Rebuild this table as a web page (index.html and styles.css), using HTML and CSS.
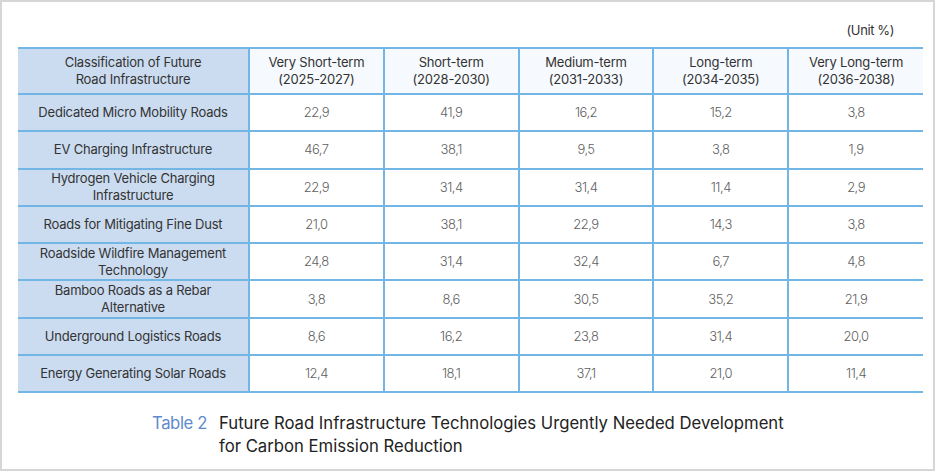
FILE: index.html
```html
<!DOCTYPE html>
<html>
<head>
<meta charset="utf-8">
<link rel="stylesheet" href="styles.css">
</head>
<body>
<div class="frame">
  <div class="unit">(Unit %)</div>
  <table class="data">
    <colgroup>
      <col class="c-first"><col class="c-num"><col class="c-num"><col class="c-num"><col class="c-num"><col class="c-num">
    </colgroup>
    <thead>
      <tr>
        <th class="lead">Classification of Future<br>Road Infrastructure</th>
        <th>Very Short-term<br>(2025-2027)</th>
        <th>Short-term<br>(2028-2030)</th>
        <th>Medium-term<br>(2031-2033)</th>
        <th>Long-term<br>(2034-2035)</th>
        <th>Very Long-term<br>(2036-2038)</th>
      </tr>
    </thead>
    <tbody>
      <tr><th class="lead">Dedicated Micro Mobility Roads</th><td>22,9</td><td>41,9</td><td>16,2</td><td>15,2</td><td>3,8</td></tr>
      <tr><th class="lead">EV Charging Infrastructure</th><td>46,7</td><td>38,1</td><td>9,5</td><td>3,8</td><td>1,9</td></tr>
      <tr><th class="lead">Hydrogen Vehicle Charging<br>Infrastructure</th><td>22,9</td><td>31,4</td><td>31,4</td><td>11,4</td><td>2,9</td></tr>
      <tr><th class="lead">Roads for Mitigating Fine Dust</th><td>21,0</td><td>38,1</td><td>22,9</td><td>14,3</td><td>3,8</td></tr>
      <tr><th class="lead">Roadside Wildfire Management<br>Technology</th><td>24,8</td><td>31,4</td><td>32,4</td><td>6,7</td><td>4,8</td></tr>
      <tr><th class="lead">Bamboo Roads as a Rebar<br>Alternative</th><td>3,8</td><td>8,6</td><td>30,5</td><td>35,2</td><td>21,9</td></tr>
      <tr><th class="lead">Underground Logistics Roads</th><td>8,6</td><td>16,2</td><td>23,8</td><td>31,4</td><td>20,0</td></tr>
      <tr><th class="lead">Energy Generating Solar Roads</th><td>12,4</td><td>18,1</td><td>37,1</td><td>21,0</td><td>11,4</td></tr>
    </tbody>
  </table>
  <div class="caption">
    <span class="cap-label">Table 2</span>
    <span class="cap-text">Future Road Infrastructure Technologies Urgently Needed Development<br>for Carbon Emission Reduction</span>
  </div>
</div>
</body>
</html>
```

FILE: styles.css
```css
html, body {
  margin: 0;
  padding: 0;
  background: #ffffff;
}

.frame {
  box-sizing: border-box;
  width: 935px;
  height: 471px;
  border: 2px solid #d6d6d6;
  padding: 18px 12px 0 16px;
  font-family: "Inter", "Liberation Sans", sans-serif;
  color: #333333;
}

.unit {
  text-align: right;
  font-size: 13px;
  color: #333333;
  padding-right: 27px;
  height: 27px;
  line-height: 20px;
  letter-spacing: -0.4px;
}

.data {
  border-collapse: collapse;
  width: 905px;
  table-layout: fixed;
  font-size: 13px;
  letter-spacing: -0.2px;
}

.c-first { width: 231px; }
.c-num { width: 134.8px; }

.data th,
.data td {
  border: 2px solid #72b6e6;
  text-align: center;
  vertical-align: middle;
  padding: 0 4px;
  line-height: 17px;
}

.data tr > :first-child { border-left: none; }
.data tr > :last-child { border-right: none; }

.data thead th {
  height: 44px;
  font-weight: 400;
  color: #333333;
  background: #f6f9fd;
}

.data thead th.lead,
.data tbody th.lead {
  background: #cbdcf0;
  font-weight: 400;
  color: #333333;
}

.data tbody tr { height: 37.3px; }

.data td {
  color: #5f5f5f;
  font-weight: 300;
  letter-spacing: -0.5px;
}

.caption {
  display: flex;
  gap: 12px;
  margin-top: 19px;
  padding-left: 134px;
  font-size: 16.7px;
  line-height: 23px;
}

.cap-label {
  color: #5d8bcb;
  letter-spacing: -0.4px;
}

.cap-text {
  color: #222222;
  letter-spacing: 0;
}
```
